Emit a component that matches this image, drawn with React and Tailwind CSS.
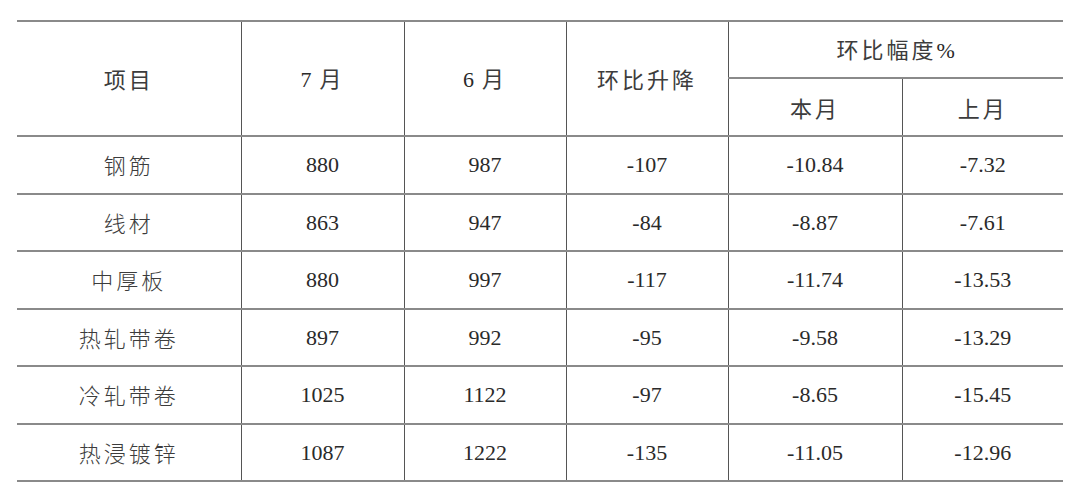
const rows = [
  ['钢筋', '880', '987', '-107', '-10.84', '-7.32'],
  ['线材', '863', '947', '-84', '-8.87', '-7.61'],
  ['中厚板', '880', '997', '-117', '-11.74', '-13.53'],
  ['热轧带卷', '897', '992', '-95', '-9.58', '-13.29'],
  ['冷轧带卷', '1025', '1122', '-97', '-8.65', '-15.45'],
  ['热浸镀锌', '1087', '1222', '-135', '-11.05', '-12.96'],
];

const cjk = "font-['Noto_Sans_CJK_SC',sans-serif] font-light tracking-[3px] text-[#3c3c3c]";
const num = "font-['Liberation_Serif','Noto_Sans_CJK_SC',serif] tracking-normal text-[#2a2a2a]";
const cell = 'border-y-2 border-y-[#8a8a8a] border-x border-x-[#555] text-center align-middle p-0';

const App = () => {
  return (
    <div className="w-[1080px] h-[495px] bg-white pt-[20px] pl-[17px]">
      <table className="border-collapse table-fixed w-[1046px] text-[22px]">
        <colgroup>
          <col className="w-[224px]" />
          <col className="w-[163px]" />
          <col className="w-[162px]" />
          <col className="w-[162px]" />
          <col className="w-[174px]" />
          <col className="w-[161px]" />
        </colgroup>
        <thead>
          <tr className="h-[57px]">
            <th rowSpan={2} className={`${cell} border-l-0 font-normal ${cjk}`}>项目</th>
            <th rowSpan={2} className={`${cell} font-normal ${cjk}`}>
              <span className={num}>7</span> 月
            </th>
            <th rowSpan={2} className={`${cell} font-normal ${cjk}`}>
              <span className={num}>6</span> 月
            </th>
            <th rowSpan={2} className={`${cell} font-normal ${cjk}`}>环比升降</th>
            <th colSpan={2} className={`${cell} border-r-0 font-normal ${cjk}`}>
              环比幅度<span className={num}>%</span>
            </th>
          </tr>
          <tr className="h-[58px]">
            <th className={`${cell} font-normal ${cjk}`}>本月</th>
            <th className={`${cell} border-r-0 font-normal ${cjk}`}>上月</th>
          </tr>
        </thead>
        <tbody>
          {rows.map((r, i) => (
            <tr key={i} className="h-[57.5px]">
              <td className={`${cell} border-l-0 ${cjk}`}>{r[0]}</td>
              {r.slice(1).map((v, j) => (
                <td key={j} className={`${cell} ${num} ${j === 4 ? 'border-r-0' : ''}`}>{v}</td>
              ))}
            </tr>
          ))}
        </tbody>
      </table>
    </div>
  );
};

export default App;
